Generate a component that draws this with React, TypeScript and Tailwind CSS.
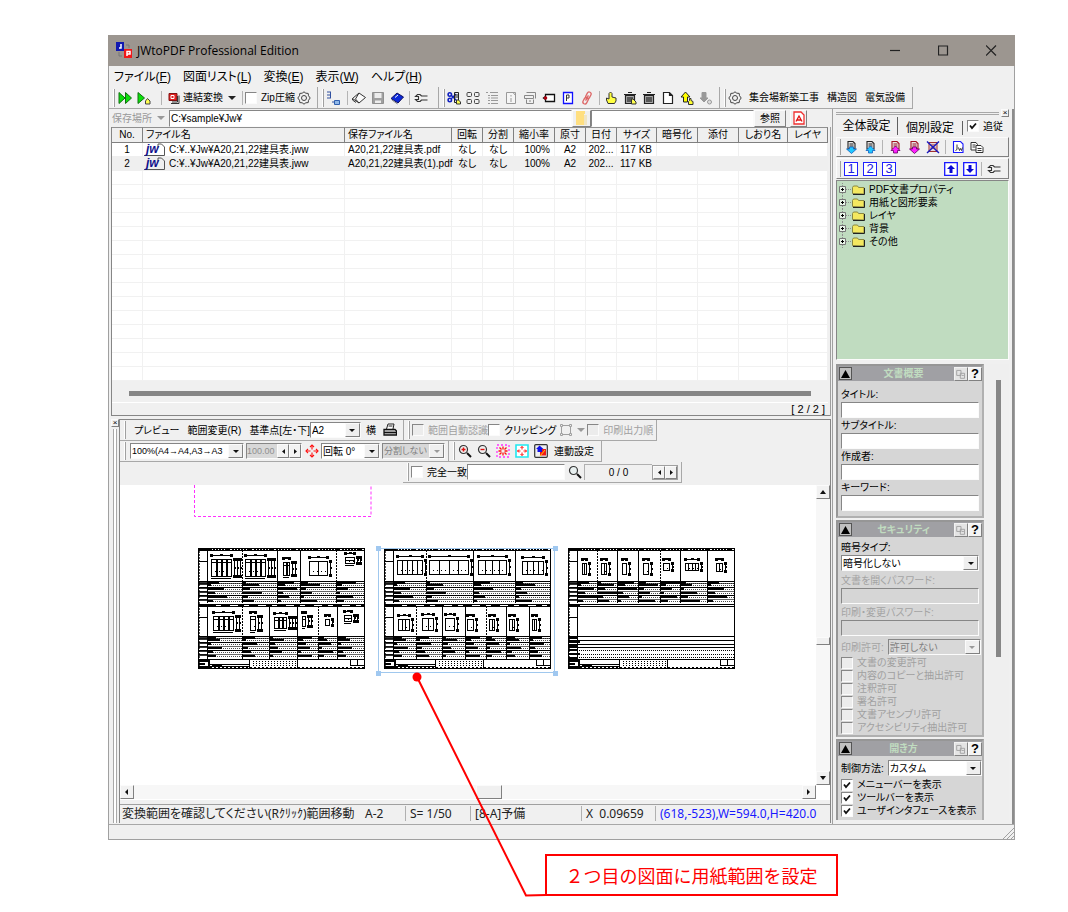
import React from "react";

const INSET = "border border-t-[#868686] border-l-[#868686] border-b-[#fbfbfb] border-r-[#fbfbfb]";
const RAISED = "border border-t-[#fbfbfb] border-l-[#fbfbfb] border-b-[#808080] border-r-[#808080]";

/* ---------- icons, all on a 14 x 14 grid ---------- */

const BULB = (
  <g>
    <path d="M8.5 13.5v-3l1-1v-2h1.500v2l2 1v3z" fill="#ffff30" stroke="#333" strokeWidth="1" />
  </g>
);

const DOC = (color: string) => (
  <path d="M4 1.500h5l2 2V9H4z M5.500 4h4 M5.500 6h4" fill="#e6e6e6" stroke={color} strokeWidth="1.100" />
);

const GLYPHS: Record<string, React.ReactNode> = {
  runAll: <path d="M1 1.500v11l6-5.500z M7.500 1.500v11l6-5.500z" fill="#0be00b" stroke="#107010" />,
  run: (
    <g>
      <path d="M1 1.500v11l6.500-5.500z" fill="#0be00b" stroke="#107010" />
      <path d="M8.500 13v-3l2-2.500 2.500 2.500v3z" fill="#ffff50" stroke="#444" />
    </g>
  ),
  merge: (
    <g>
      <path d="M2 2.500h8v7H2z" fill="#e02020" stroke="#801010" />
      <path d="M4 12.500h8v-8M5 11h5.500V5" fill="none" stroke="#333" />
      <path d="M4 4.500h3v3H4z" fill="none" stroke="#fff" />
    </g>
  ),
  gear: (
    <g fill="none" stroke="#444">
      <path d="M7 .8l1.800 1.400 2.400.2.300 2.300L13.200 7l-1.700 2.300-.3 2.300-2.400.2L7 13.200l-1.800-1.400-2.400-.2-.3-2.300L.8 7l1.700-2.300.3-2.300 2.400-.2z" />
      <circle cx="7" cy="7" r="2.500" />
    </g>
  ),
  tree: (
    <g>
      <path d="M1 1h4M1 4h4M1 7h4M4.500 1v6M6 11h3" fill="none" stroke="#3050a0" />
      <path d="M8.500 9.500h5v4h-5z" fill="#90b8e8" stroke="#3060b0" />
    </g>
  ),
  book: (
    <g>
      <path d="M.5 7.500L7 2l6.500 4.500L7 12z" fill="#fbfbfb" stroke="#333" />
      <path d="M.5 7.500v1.500L4 11.500M7 2L3.500 8 7 12" fill="none" stroke="#333" />
    </g>
  ),
  floppy: (
    <g>
      <path d="M1.500 1.500h11v11h-11z" fill="#a0a0a0" stroke="#909090" />
      <path d="M3.500 2h7v5h-7z M4 9.500h6V12H4z" fill="#ededed" />
    </g>
  ),
  bookBlue: (
    <g>
      <path d="M1 7.500L7 2l6.500 4L8 12z" fill="#0a28d8" stroke="#101060" />
      <path d="M2 9l5.500 4" stroke="#888" fill="none" />
      <path d="M5 6.500l3-2.500" stroke="#fff" fill="none" />
    </g>
  ),
  wrench: (
    <path d="M6 3.500H3.500L1.500 5.500h3v3h-3l2 2H6M6 3.500L7.500 5h6M6 10.500L7.500 9h6" fill="none" stroke="#333" strokeWidth="1.100" />
  ),
  cut: (
    <g>
      <circle cx="2.800" cy="3.500" r="1.700" fill="none" stroke="#1020c0" strokeWidth="1.600" />
      <circle cx="2.800" cy="9" r="1.700" fill="none" stroke="#1020c0" strokeWidth="1.600" />
      <path d="M4 4l6 6M4 8l5-5" stroke="#1020c0" strokeWidth="1.400" />
      <path d="M7.500 1.500h4v10h-4zM8 4h3M8 6h3" fill="none" stroke="#222" />
      <path d="M9.500 13v-4h2l2 2v2z" fill="#ffff50" stroke="#333" />
    </g>
  ),
  grid: (
    <g fill="none" stroke="#444">
      <rect x="1" y="1.500" width="4.500" height="4" rx="1" />
      <rect x="8.500" y="1.500" width="4.500" height="4" rx="1" />
      <rect x="1" y="8.500" width="4.500" height="4" rx="1" />
      <rect x="8.500" y="8.500" width="4.500" height="4" rx="1" />
    </g>
  ),
  list: <path d="M1 1.500h2M5 1.500h8M3 4.500h2M6 4.500h7M3 7h2M6 7h7M3 9.500h2M6 9.500h7M3 12.500h2M6 12.500h7" stroke="#999" />,
  info: <path d="M2.500 1.500h9v11h-9z M7 4v1.500M7 7v4M9 1.500l2.500 3" fill="#f5f5f5" stroke="#999" />,
  wins: <path d="M1.500 4.500h9v3h-9z M3.500 1.500h9v6 M3.500 8.500v4h7v-4 M6 10h2" fill="none" stroke="#888" />,
  tag: (
    <g>
      <path d="M3.500 3.500h9v7h-9v-2l-2-1.500 2-1.500z" fill="#fff" stroke="#111" strokeWidth="1.300" />
      <circle cx="3.500" cy="7" r="1.800" fill="#b00010" />
    </g>
  ),
  page: (
    <g>
      <path d="M2.500 1.500h9v11h-9z" fill="#fff" stroke="#1010ff" strokeWidth="1.300" />
      <path d="M5.500 10V4H8v3H5.500" fill="none" stroke="#333" />
    </g>
  ),
  link: (
    <g fill="none" stroke="#dd6666" strokeWidth="1.300" transform="rotate(28 7 7)">
      <rect x="5" y="0.500" width="4" height="7" rx="2" />
      <rect x="5" y="6.500" width="4" height="7" rx="2" />
      <path d="M7 4v6" />
    </g>
  ),
  hand: <path d="M4 12.500L2.500 9V7L5 8V2.500L6.500 1 8 2.500V6l4 1v3l-1.500 2.500z" fill="#ffff40" stroke="#333" />,
  trashHand: (
    <g>
      <path d="M2.500 4.500h9v8h-9z M1 3.500h12M5 1.500h4M5 6v5M7 6v5M9 6v5" fill="#aaa" stroke="#222" strokeWidth="1.200" />
      <path d="M8.500 13V8h1.500l3 3v2z" fill="#ffff50" stroke="#333" />
    </g>
  ),
  trash: <path d="M2.500 4.500h9v8h-9z M1 3.500h12M5 1.500h4M5 6v5M7 6v5M9 6v5" fill="#aaa" stroke="#222" strokeWidth="1.200" />,
  blank: <path d="M2.500 1.500H8.500L11.500 4.500V12.500H2.500z M8.500 1.500v3h3" fill="#fff" stroke="#222" strokeWidth="1.200" />,
  up: (
    <g>
      <path d="M5.500 1L1 6h2.500v5h4V6H10z" fill="#ffff00" stroke="#222" />
      {BULB}
    </g>
  ),
  down: (
    <g>
      <path d="M5 11L1 7h2V1.500h4V7h2z" fill="#999" stroke="#999" />
      <circle cx="10.500" cy="11" r="2" fill="#ddd" stroke="#999" />
    </g>
  ),
  docDownCyan: (
    <g>
      {DOC("#222")}
      <path d="M7.500 13.500L2.500 9H5.500V7h4v2h3z" fill="#20c8ff" stroke="#1060c0" strokeWidth=".8" />
    </g>
  ),
  docUpCyan: (
    <g>
      {DOC("#222")}
      <path d="M7.500 6L3 10.500H5.500V13h4v-2.500H12z" fill="#20c8ff" stroke="#1060c0" strokeWidth=".8" />
    </g>
  ),
  docUpPink: (
    <g>
      {DOC("#a01020")}
      <path d="M7.500 6L3 10.500H5.500V13h4v-2.500H12z" fill="#ff20ff" stroke="#600060" strokeWidth=".8" />
    </g>
  ),
  docDownPink: (
    <g>
      {DOC("#a01020")}
      <path d="M7.500 13.500L2.500 9H5.500V7h4v2h3z" fill="#ff20ff" stroke="#600060" strokeWidth=".8" />
    </g>
  ),
  docX: (
    <g>
      <path d="M3 2.500h8v9H3z M4.500 5h5M4.500 8h5" fill="#e8d8d8" stroke="#a03030" />
      <path d="M1 1.500l12 11.500M13 1.500L1 13" stroke="#1818c0" strokeWidth="1.400" />
    </g>
  ),
  docJ: (
    <g>
      <path d="M2.500 1.500h7l2.500 2.500v8.500h-9.500z" fill="#fff" stroke="#1818ff" strokeWidth="1.100" />
      <path d="M6 4.500v5l-1.500 1M7.500 7.500l1 3 1-2 1 2 1-3" fill="none" stroke="#333" />
    </g>
  ),
  copy: (
    <g fill="#fff" stroke="#333">
      <path d="M1 2.500h5l1.500 2V10H1z M2.500 5h3M2.500 7h3" />
      <path d="M6 5.500h5l2 2V12.500H6z M7.500 8.500h4M7.500 10.500h4" />
    </g>
  ),
  upBox: (
    <g>
      <path d="M.7.700h12.600v12.600H.7z" fill="#fff" stroke="#1818ff" strokeWidth="1.300" />
      <path d="M7 3L3 7h2.500v4h3V7H11z" fill="#0808d0" />
    </g>
  ),
  downBox: (
    <g>
      <path d="M.7.700h12.600v12.600H.7z" fill="#fff" stroke="#1818ff" strokeWidth="1.300" />
      <path d="M7 11L3 7h2.500V3h3v4H11z" fill="#0808d0" />
    </g>
  ),
  printer: (
    <g>
      <path d="M3.500 6l1.500-5h6l-1 5M5.500 3h4" fill="#fff" stroke="#222" />
      <path d="M1 6.500h11l1.500 1.500v4H1z M1 9.500h12" fill="#ccc" stroke="#111" strokeWidth="1.300" />
    </g>
  ),
  frame: (
    <g fill="none" stroke="#a0a0a0">
      <path d="M2.500 2.500h9v9h-9z" />
      <path d="M1.500 1.500h2v2h-2z M10.500 1.500h2v2h-2z M1.500 10.500h2v2h-2z M10.500 10.500h2v2h-2z" fill="#efefef" />
    </g>
  ),
  target: (
    <g fill="none" stroke="#ff1010" strokeWidth="1.100">
      <path d="M5 3l2-2 2 2M5 11l2 2 2-2M3 5L1 7l2 2M11 5l2 2-2 2" />
      <path d="M7 1v4.500M7 8.500V13M1 7h4.500M8.500 7H13" />
    </g>
  ),
  zoomIn: (
    <g>
      <circle cx="5.500" cy="5.500" r="4" fill="#eee" stroke="#333" strokeWidth="1.200" />
      <path d="M9 9l4 4" stroke="#111" strokeWidth="2" />
      <path d="M3.500 5.500h4M5.500 3.500v4" stroke="#e01010" strokeWidth="1.400" />
    </g>
  ),
  zoomOut: (
    <g>
      <circle cx="5.500" cy="5.500" r="4" fill="#eee" stroke="#333" strokeWidth="1.200" />
      <path d="M9 9l4 4" stroke="#111" strokeWidth="2" />
      <path d="M3.500 5.500h4" stroke="#e01010" strokeWidth="1.400" />
    </g>
  ),
  find: (
    <g>
      <circle cx="5.500" cy="5.500" r="4" fill="#e8f0f0" stroke="#333" strokeWidth="1.200" />
      <path d="M9 9l4 4" stroke="#111" strokeWidth="2" />
    </g>
  ),
  fitPink: (
    <g>
      <path d="M1 1h12v12H1z" fill="none" stroke="#ff30ff" strokeWidth="1.300" strokeDasharray="2 2" />
      <path d="M3.500 3.500l2 2M10.500 3.500l-2 2M3.500 10.500l2-2M10.500 10.500l-2-2M7 2.500v3M7 8.500v3M2.500 7h3M8.500 7h3" stroke="#ff1010" strokeWidth="1.300" />
    </g>
  ),
  fitCyan: (
    <g>
      <path d="M1 1h12v12H1z" fill="#fff" stroke="#20e8f0" strokeWidth="1.600" />
      <path d="M7 2.500v3M7 8.500v3M2.500 7h3M8.500 7h3M5.500 4L7 2.500 8.500 4M5.500 10L7 11.500 8.500 10M4 5.500L2.500 7 4 8.500M10 5.500L11.500 7 10 8.500" fill="none" stroke="#ff1010" />
    </g>
  ),
  shapes: (
    <g>
      <rect x=".7" y=".7" width="12.600" height="12.600" rx="1" fill="#eee" stroke="#333" strokeWidth="1.200" />
      <path d="M6 5h6v6.500H6z" fill="#f01818" />
      <path d="M5.500 1.500l4 3.500H8v3H3.500V5H2z" fill="#1010e8" />
      <path d="M6 12l5-6" stroke="#ffd000" />
    </g>
  ),
  pdf: (
    <g>
      <path d="M2 1h7l3 3v9H2z" fill="#fff" stroke="#f03030" strokeWidth="1.300" />
      <path d="M4 10.500L7 5l3 5.500M4.500 9h5" fill="none" stroke="#e01010" strokeWidth="1.300" />
    </g>
  ),
  folderHalf: (
    <g>
      <path d="M1 0h9v3H9v11H1z" fill="#ffdf80" />
      <path d="M9 4h3v10H9z" fill="#f0d070" opacity=".35" />
    </g>
  ),
};

function Ico({ n, s = 14 }: { n: string; s?: number }) {
  return (
    <svg width={s} height={s} viewBox="0 0 14 14" className="shrink-0" aria-hidden="true">
      {GLYPHS[n]}
    </svg>
  );
}

function IconButton({ n, label }: { n: string; label: string }) {
  return (
    <button type="button" aria-label={label} className="flex h-full w-[19px] shrink-0 items-center justify-center">
      <Ico n={n} />
    </button>
  );
}

function TextButton({ children }: { children: React.ReactNode }) {
  return (
    <button type="button" className="shrink-0 px-1 whitespace-nowrap">
      {children}
    </button>
  );
}

const Sep = () => <span className="mx-[2px] h-[14px] w-px shrink-0 bg-[#b4b4b4]" />;

function Band({ children }: { children: React.ReactNode }) {
  return (
    <div className="flex h-full shrink-0 items-center border-r border-b border-[#a8a8a8] pr-[3px]">
      <span className="ml-1 h-[18px] w-[2px] shrink-0 border-r border-[#a0a0a0] bg-white" />
      {children}
    </div>
  );
}

function Tick({ label, id, checked, disabled, className = "" }: { label: string; id: string; checked?: boolean; disabled?: boolean; className?: string }) {
  return (
    <span className={"flex shrink-0 items-center " + className}>
      <span className={"relative flex size-3 shrink-0 " + INSET + (disabled ? " bg-[#ececec]" : " bg-white")}>
        <input
          type="checkbox"
          id={id}
          defaultChecked={checked}
          disabled={disabled}
          className="peer size-full appearance-none"
        />
        <svg viewBox="0 0 10 10" className="pointer-events-none absolute inset-0 hidden size-[10px] peer-checked:block" aria-hidden="true">
          <path d="M2 4.500l2 2.500 4-4.500" fill="none" stroke="#111" strokeWidth="1.800" />
        </svg>
      </span>
      <label htmlFor={id} className={"pl-1 whitespace-nowrap " + (disabled ? "text-[#a0a0a0]" : "")}>
        {label}
      </label>
    </span>
  );
}

function Drop({ label, value, disabled, className = "", id }: { label: string; value: string; disabled?: boolean; className?: string; id?: string }) {
  return (
    <span className={"relative flex h-4 shrink-0 " + INSET + (disabled ? " bg-[#d8d8d8] text-[#808080] " : " bg-white ") + className}>
      <select id={id} aria-label={label} disabled={disabled} className="h-full w-full appearance-none overflow-hidden bg-transparent pr-[15px] pl-px opacity-100">
        <option>{value}</option>
      </select>
      <span className={"pointer-events-none absolute top-0 right-0 flex h-full w-[15px] items-center justify-center bg-[#efefef] " + RAISED}>
        <svg width="6" height="3" aria-hidden="true">
          <path d="M0 0h6L3 3z" fill={disabled ? "#999" : "#111"} />
        </svg>
      </span>
    </span>
  );
}

function Spin() {
  return (
    <>
      {[
        ["前へ", "M3 0v5L0 2.500z"],
        ["次へ", "M0 0v5L3 2.500z"],
      ].map(([l, d]) => (
        <button key={l} type="button" aria-label={l} className={"flex h-full w-3 shrink-0 items-center justify-center bg-[#f2f2f2] " + RAISED}>
          <svg width="3" height="5" aria-hidden="true">
            <path d={d} fill="#111" />
          </svg>
        </button>
      ))}
    </>
  );
}

/* ---------- file list ---------- */

const COLS: [string, string][] = [
  ["No.", "w-[31px]"],
  ["ファイル名", ""],
  ["保存ファイル名", "w-[107px]"],
  ["回転", "w-[31px]"],
  ["分割", "w-[31px]"],
  ["縮小率", "w-[41px]"],
  ["原寸", "w-[31px]"],
  ["日付", "w-[31px]"],
  ["サイズ", "w-[40px]"],
  ["暗号化", "w-[41px]"],
  ["添付", "w-[41px]"],
  ["しおり名", "w-[49px]"],
  ["レイヤ", "w-[40px]"],
];

const FILES = [
  ["1", "C:¥..¥Jw¥A20,21,22建具表.jww", "A20,21,22建具表.pdf", "なし", "なし", "100%", "A2", "202...", "117 KB", "", "", "", ""],
  ["2", "C:¥..¥Jw¥A20,21,22建具表.jww", "A20,21,22建具表(1).pdf", "なし", "なし", "100%", "A2", "202...", "117 KB", "", "", "", ""],
];

function FileList() {
  const blanks = Array.from({ length: 15 }, (_, i) => i);
  return (
    <table className="w-full table-fixed border-separate border-spacing-0 bg-white">
      <colgroup>
        {COLS.map(([h, w]) => (
          <col key={h} className={w} />
        ))}
      </colgroup>
      <thead>
        <tr>
          {COLS.map(([h], i) => (
            <th
              key={h}
              className={
                "h-4 overflow-hidden border-t border-r border-b border-t-[#909090] border-r-[#808080] border-b-[#808080] bg-[#efefef] p-0 px-[3px] leading-[14px] font-normal whitespace-nowrap " +
                (i === 1 || i === 2 ? "text-left" : "text-center")
              }
            >
              {h}
            </th>
          ))}
        </tr>
      </thead>
      <tbody>
        {FILES.map((r, k) => (
          <tr key={k} className={k ? "bg-[#efefef]" : ""}>
            {r.map((c, i) => (
              <td
                key={i}
                className={
                  "h-[14px] border-r border-b border-[#efefef] p-0 leading-[13px] whitespace-nowrap " +
                  (i === 1 ? "" : i === 2 ? "pl-[3px]" : i === 5 || i === 8 ? "pr-1 text-right" : "text-center")
                }
              >
                {i === 1 ? (
                  <span className="flex items-center gap-1">
                    <svg width="22" height="13" aria-hidden="true">
                      <path d="M1 12.500h20.500V4l-3-3H15v3.500" fill="none" stroke="#555" />
                      <text x="3" y="10" fontSize="12" fontStyle="italic" fontWeight="bold" fontFamily="Liberation Sans, sans-serif" fill="#10108c">
                        jw
                      </text>
                    </svg>
                    {c}
                  </span>
                ) : (
                  c
                )}
              </td>
            ))}
          </tr>
        ))}
        {blanks.map((b) => (
          <tr key={b}>
            {COLS.map(([h]) => (
              <td key={h} className="h-[14px] border-r border-b border-[#f1f1f1] p-0" />
            ))}
          </tr>
        ))}
      </tbody>
    </table>
  );
}

/* ---------- preview drawings ---------- */

type Fig = [number, number, number, number, number, number?];
// x, y, width, height, panes, number of vertical dimension lines

function Fixture({ f }: { f: Fig }) {
  const [x, y, w, h, n, d = 1] = f;
  const panes = Array.from({ length: n - 1 }, (_, i) => x + Math.round(((i + 1) * w) / n));
  const right = Array.from({ length: d }, (_, i) => x + w + 3 + i * 3);
  const dense = d > 1;
  const dots = [
    [x, y - 4],
    [x + w, y - 4],
    ...right.flatMap((r) => [
      [r, y],
      [r, y + h],
    ]),
  ];
  return (
    <g stroke="#000" fill="none" strokeWidth="1">
      <rect x={x + 0.5} y={y + 0.5} width={w} height={h} />
      {dense && <path d={`M${x} ${y + 3.5}h${w}M${x} ${y + h + 2.5}h${w}`} />}
      {panes.map((p) => (
        <path key={p} d={`M${p + 0.5} ${y}v${h}`} strokeWidth={dense ? 2 : 1} />
      ))}
      <path d={`M${x} ${y + Math.round(h * 0.7) + 0.5}h${w}`} strokeDasharray="1 3" />
      <path d={`M${x} ${y - 3.5}h${w}`} />
      <path d={`M${x + w / 2 - 1} ${y - 4.5}h3`} />
      {right.map((r) => (
        <path key={r} d={`M${r + 0.5} ${y}v${h}`} />
      ))}
      {right.map((r) => (
        <path key={r} d={`M${r} ${y + Math.round(h / 2)}h2`} strokeWidth="2" />
      ))}
      {dots.map(([a, b]) => (
        <rect key={a + "," + b} x={a - 1} y={b - 1} width="3" height="3" fill="#000" stroke="none" />
      ))}
    </g>
  );
}

function Rows({ top, edges, lens, bottom }: { top: number; edges: number[]; lens: number[]; bottom: number }) {
  const ys = [0, 2, 6, 10, 14, 18].map((v) => top + v).filter((v) => v < bottom);
  return (
    <g stroke="#000" fill="none">
      {ys.map((y, i) => (
        <g key={y}>
          <path d={`M0 ${y + 0.5}H167`} strokeOpacity={i % 2 ? 0.6 : 1} />
          <path d={`M9 ${y + 2.5}H167`} strokeDasharray="1 1" strokeOpacity=".7" />
          <path d={`M0 ${y + 1}H9`} strokeWidth="2" strokeOpacity=".8" />
          {edges.map((e, k) => (
            <path key={e} d={`M${e} ${y + 2}h${lens[(i + k) % lens.length]}`} strokeWidth="2" />
          ))}
        </g>
      ))}
    </g>
  );
}

function Sheet({ x, top, bottom, figs, emptyBottom }: { x: number; top: number[]; bottom: number[]; figs: Fig[]; emptyBottom?: boolean }) {
  return (
    <g transform={`translate(${x} 63)`} shapeRendering="crispEdges">
      <g fill="none" stroke="#000">
        <rect x=".5" y=".5" width="166" height="120" />
        <path d="M0 1h12" strokeWidth="2" />
        <path d="M12 1h155" strokeWidth="2" strokeDasharray="2 1 2 1 2 1 2 1 2 1 5 2" />
        <path d="M0 2.500h167M0 56.500h167M0 58.500h167M0 111.500h167M0 13.500h9M0 69.500h9M0 88.500h167M0 33.500h167" />
        <path d="M0 57h12" strokeWidth="2" />
        <path d="M1 0v120" strokeWidth="2" strokeDasharray="2 1" strokeOpacity=".7" />
        {!emptyBottom && <path d="M12 57.500h155" strokeDasharray="6 5 9 8" />}
        {[9, ...top].map((c, i) => (
          <path key={c} d={`M${c}.5 2V55`} strokeDasharray={i % 3 === 1 ? "2 1" : "none"} />
        ))}
        {[9, ...bottom].map((c, i) => (
          <path key={c} d={`M${c}.5 58V111`} strokeDasharray={i % 3 === 1 ? "2 1" : "none"} />
        ))}
      </g>
      <Rows top={33} bottom={54} edges={[9, ...top]} lens={[12, 4, 17, 8, 20, 6]} />
      {emptyBottom ? (
        <g stroke="#000" fill="none">
          <path d="M0 92.500h167M0 96.500h167M0 99.500h167" />
          <path d="M9 102.500h158M9 106.500h158M9 109.500h158" strokeDasharray="1 1" />
          <path d="M0 90h9M0 94h12M0 98h9M0 102h9M0 106h12M0 110h9" strokeWidth="2" />
        </g>
      ) : (
        <Rows top={88} bottom={110} edges={[9, ...bottom]} lens={[9, 13, 4, 15, 6]} />
      )}
      {figs.map((f, i) => (
        <Fixture key={i} f={f} />
      ))}
      <g stroke="#000" fill="none">
        <path d="M51.500 112v9M99.500 112v9M152.500 112v5.500h14M159.500 112v6" />
        <path d="M1 113h10M1 116h6M11 112v9M1 119h12" strokeWidth="2" />
        <path d="M12 116.500h40M12 118.500h40" />
        <path d="M14 118h10" strokeWidth="2" />
        <path d="M55 113.500h43M55 115.500h43M55 117.500h43" strokeDasharray="1 2" />
        <path d="M0 119.500h167" strokeDasharray="2 2" />
      </g>
    </g>
  );
}

function Preview() {
  return (
    <svg className="h-[300px] min-w-0 flex-1 bg-white" role="img" aria-label="図面プレビュー">
      <path d="M74.500 0v31.500h176.500V0" fill="none" stroke="#ff30ff" strokeDasharray="3 2" />
      <Sheet
        x={78}
        top={[44, 79, 102, 138]}
        bottom={[44, 71, 99, 120, 139]}
        figs={[
          [13, 11, 20, 17, 4, 3],
          [47, 11, 20, 17, 4, 3],
          [85, 14, 6, 13, 2, 2],
          [111, 13, 18, 14, 2, 1],
          [147, 9, 9, 6, 1, 2],
          [15, 68, 20, 14, 4, 2],
          [52, 68, 5, 14, 1, 2],
          [76, 69, 12, 11, 3, 3],
          [104, 68, 3, 10, 1, 2],
          [127, 71, 4, 6, 1, 1],
          [146, 67, 7, 6, 1, 2],
        ]}
      />
      <Sheet
        x={264}
        top={[42, 89, 131]}
        bottom={[32, 58, 81, 102, 122, 145]}
        figs={[
          [13, 12, 25, 14, 5],
          [45, 12, 39, 14, 4],
          [94, 12, 28, 14, 4],
          [138, 13, 21, 13, 4],
          [14, 71, 11, 11, 3, 1],
          [38, 70, 11, 12, 2],
          [61, 70, 9, 12, 1],
          [83, 71, 6, 11, 1],
          [105, 71, 5, 11, 2],
          [125, 71, 5, 11, 2],
          [148, 71, 4, 11, 2],
        ]}
      />
      <Sheet
        x={448}
        top={[29, 49, 70, 92, 112, 139]}
        bottom={[]}
        emptyBottom
        figs={[
          [14, 15, 4, 11, 2, 1],
          [33, 15, 5, 11, 2, 1],
          [54, 15, 4, 11, 1],
          [75, 15, 5, 11, 1],
          [95, 15, 6, 7, 1],
          [117, 15, 13, 7, 4, 1],
          [148, 15, 6, 8, 2, 1],
        ]}
      />
      <rect x="258.500" y="63.500" width="176" height="124" fill="none" stroke="#a0c8ee" />
      {[
        [258, 63],
        [435, 63],
        [258, 188],
        [435, 188],
      ].map(([a, b]) => (
        <rect key={a + "-" + b} x={a - 2} y={b - 2} width="5" height="5" fill="#a0c8f0" />
      ))}
    </svg>
  );
}

function ScrollArrow({ d, label }: { d: string; label: string }) {
  return (
    <button type="button" aria-label={label} className={"flex size-[14px] shrink-0 items-center justify-center bg-[#f2f2f2] " + RAISED}>
      <svg width="6" height="6" aria-hidden="true">
        <path d={d} fill="#111" />
      </svg>
    </button>
  );
}

/* ---------- right-hand settings ---------- */

function Group({ title, children, className = "" }: { title: string; children: React.ReactNode; className?: string }) {
  return (
    <section className={"mb-[2px] border-2 border-t-[#969696] border-l-[#969696] border-r-[#b0b0b0] border-b-[#b0b0b0] bg-[#d6d6d6] " + className}>
      <header className="flex h-[15px] items-center bg-[#a0a0a4]">
        <button type="button" aria-label="折りたたむ" className="m-px flex size-[13px] items-center justify-center border border-[#555] bg-[#c0c0c0]">
          <svg width="9" height="8" aria-hidden="true">
            <path d="M4.500 0L9 8H0z" fill="#000" />
          </svg>
        </button>
        <h2 className="flex-1 text-center leading-[13px] font-bold text-[#c0dcc0]">{title}</h2>
        <button type="button" aria-label="コピー" className={"flex size-[14px] items-center justify-center bg-[#ececec] opacity-90 " + RAISED}>
          <svg width="10" height="10" viewBox="0 0 14 14" aria-hidden="true">
            <path d="M1 2h6v7H1z M6 6h6v7H6z M8 9h3" fill="none" stroke="#a0a0a0" strokeWidth="1.300" />
          </svg>
        </button>
        <button type="button" aria-label="ヘルプ" className={"flex size-[14px] items-center justify-center bg-[#f4f4f4] text-[13px] leading-none font-bold " + RAISED}>
          ?
        </button>
      </header>
      {children}
    </section>
  );
}

function Field({ label, id, disabled }: { label: string; id: string; disabled?: boolean }) {
  return (
    <div className={disabled ? "mb-px" : ""}>
      <label htmlFor={id} className={"block h-[15px] leading-[15px] " + (disabled ? "text-[#a4a4a4]" : "")}>
        {label}
      </label>
      <input
        id={id}
        type="text"
        disabled={disabled}
        className={"block h-4 w-full px-1 " + INSET + (disabled ? " bg-[#d6d6d6]" : " bg-white")}
      />
    </div>
  );
}

const TREE = ["PDF文書プロパティ", "用紙と図形要素", "レイヤ", "背景", "その他"];
const PERMS = ["文書の変更許可", "内容のコピーと抽出許可", "注釈許可", "署名許可", "文書アセンブリ許可", "アクセシビリティ抽出許可"];
const OPENING = ["メニューバーを表示", "ツールバーを表示", "ユーザインタフェースを表示"];

function Settings() {
  return (
    <aside className="flex w-[182px] shrink-0 flex-col border-r-2 border-l border-r-[#8c8c8c] border-l-[#a0a0a0] px-[3px]">
      <div className="flex h-[8px] items-center gap-[2px]">
        <span className="h-[3px] flex-1 border-y border-[#a8a8a8]" />
        <button type="button" aria-label="閉じる" className={"flex size-2 items-center justify-center text-[8px] leading-none " + RAISED}>
          ×
        </button>
      </div>
      <div className="flex h-[18px] items-center" role="tablist">
        <button type="button" role="tab" aria-selected="true" className="h-full w-[62px] shrink-0 border-r border-[#606060] text-[12px] whitespace-nowrap">
          全体設定
        </button>
        <button type="button" role="tab" aria-selected="false" className="mt-[3px] h-[14px] w-[65px] shrink-0 border-r border-[#606060] text-[12px] leading-[14px] whitespace-nowrap">
          個別設定
        </button>
        <Tick id="follow" label="追従" checked className="pl-1" />
      </div>
      <div className={"mt-[2px] flex h-[20px] items-center " + RAISED}>
        <span className="ml-[3px] h-4 w-px bg-[#a0a0a0]" />
        <IconButton n="docDownCyan" label="読込" />
        <IconButton n="docUpCyan" label="書出" />
        <span className="w-px" />
        <Sep />
        <IconButton n="docUpPink" label="上へ適用" />
        <IconButton n="docDownPink" label="下へ適用" />
        <IconButton n="docX" label="解除" />
        <span className="w-px" />
        <Sep />
        <IconButton n="docJ" label="Jw設定" />
        <IconButton n="copy" label="コピー" />
      </div>
      <div className={"mt-px flex h-[21px] items-center pr-[5px] " + RAISED}>
        <span className="ml-[3px] h-4 w-px bg-[#a0a0a0]" />
        <div className="flex flex-1 gap-[5px] pl-[3px]">
          {["1", "2", "3"].map((n) => (
            <button key={n} type="button" className="size-[14px] border border-[#2020ff] bg-white text-[13px] leading-[12px] text-[#2020e0]">
              {n}
            </button>
          ))}
        </div>
        <IconButton n="upBox" label="上へ" />
        <IconButton n="downBox" label="下へ" />
        <Sep />
        <IconButton n="wrench" label="設定" />
      </div>
      <ul className={"mt-px h-[180px] bg-[#c0dcc0] pt-[2px] pl-[2px] " + INSET}>
        {TREE.map((t) => (
          <li key={t} className="flex h-[13px] items-center">
            <svg width="26" height="13" aria-hidden="true">
              <path d="M.5 3.500h6v6h-6z" fill="#e8f4e8" stroke="#777" />
              <path d="M2 6.500h3M3.500 5v3" stroke="#000" />
              <path d="M7 6.500h6M3.500 0v3M3.500 10v3" stroke="#909090" strokeDasharray="1 1" />
              <path d="M13.500 10.500V4.500l1-1.500h4l1 1.500h5.500v6.500z" fill="#f4e860" stroke="#8a8840" />
              <path d="M14 11.500h11.500V5" fill="none" stroke="#222" />
            </svg>
            <span className="pl-1 whitespace-nowrap">{t}</span>
          </li>
        ))}
      </ul>
      <div className="mt-[4px] flex h-[456px] overflow-hidden">
        <div className="min-w-0 flex-1">
          <Group title="文書概要">
            <div className="px-[3px] pt-[6px] pb-[5px]">
              <Field id="title" label="タイトル:" />
              <Field id="subtitle" label="サブタイトル:" />
              <Field id="author" label="作成者:" />
              <Field id="keyword" label="キーワード:" />
            </div>
          </Group>
          <Group title="セキュリティ">
            <div className="px-[3px] pt-1 pb-px">
              <label htmlFor="crypt" className="block h-[14px] leading-[14px]">
                暗号タイプ:
              </label>
              <Drop id="crypt" label="暗号タイプ" value="暗号化しない" />
              <div className="pt-[2px]">
                <Field id="openpw" label="文書を開くパスワード:" disabled />
                <Field id="editpw" label="印刷・変更パスワード:" disabled />
              </div>
              <div className="flex items-center gap-1 pt-[2px] pb-px">
                <label htmlFor="print" className="whitespace-nowrap text-[#a4a4a4]">
                  印刷許可:
                </label>
                <Drop id="print" label="印刷許可" value="許可しない" disabled className="w-[93px]" />
              </div>
              {PERMS.map((p, i) => (
                <Tick key={p} id={"perm" + i} label={p} disabled className="h-[13px]" />
              ))}
            </div>
          </Group>
          <Group title="開き方">
            <div className="px-[3px] pt-1 pb-[4px]">
              <div className="flex items-center gap-1 pb-[2px]">
                <label htmlFor="control" className="whitespace-nowrap">
                  制御方法:
                </label>
                <Drop id="control" label="制御方法" value="カスタム" className="w-[94px]" />
              </div>
              {OPENING.map((p, i) => (
                <Tick key={p} id={"open" + i} label={p} checked className="h-[13px]" />
              ))}
            </div>
          </Group>
        </div>
        <div className="ml-[2px] w-[23px] shrink-0 bg-[#efefef] pt-4 pl-[10px]">
          <div className="h-[277px] w-[5px] bg-[#868686]" />
        </div>
      </div>
    </aside>
  );
}

/* ---------- page ---------- */

const MENUS: [string, string][] = [
  ["ファイル", "F"],
  ["図面リスト", "L"],
  ["変換", "E"],
  ["表示", "W"],
  ["ヘルプ", "H"],
];

export default function App() {
  return (
    <div className="relative min-h-screen overflow-hidden bg-white pt-[35px] pr-[53px] pl-[108px] font-['Liberation_Sans','Noto_Sans_CJK_JP',sans-serif] text-[10px] leading-[13px] text-black [font-feature-settings:'palt']">
      <main className="border border-[#a0a0a0] bg-[#f0f0f0]">
        <div className="-mx-px -mt-px flex h-[31px] items-center bg-[#9c9690] pl-2">
          <svg width="17" height="17" aria-hidden="true">
            <path d="M0 0h8v9H0z" fill="#1018b0" />
            <path d="M8 7h8v9H8z" fill="#f01818" />
            <path d="M5 2v4H3M11 14V9.500h3v2.500h-3" fill="none" stroke="#fff" strokeWidth="1.500" />
            <path d="M3 10v4h3M10 3h3v3" fill="none" stroke="#777" />
          </svg>
          <h1 className="flex-1 pl-1 font-['Open_Sans','Noto_Sans',sans-serif] text-[12px]">JWtoPDF Professional Edition</h1>
          {[
            ["最小化", "M0 5.500h10"],
            ["最大化", "M.5 1h9v9h-9z"],
            ["閉じる", "M0 .5l10 10M10 .5l-10 10"],
          ].map(([l, d]) => (
            <button key={l} type="button" aria-label={l} className="flex h-full w-12 items-center justify-center">
              <svg width="11" height="11" aria-hidden="true">
                <path d={d} fill="none" stroke="#222" strokeWidth="1.200" />
              </svg>
            </button>
          ))}
        </div>

        <nav className="flex h-[21px] items-center gap-3 pl-[5px] font-['Liberation_Sans','Noto_Sans_CJK_JP',sans-serif] text-[12px] leading-[18px]">
          {MENUS.map(([m, k]) => (
            <button key={m} type="button" className="whitespace-nowrap">
              {m}(<u>{k}</u>)
            </button>
          ))}
        </nav>

        <div className="flex h-[22px]">
          <Band>
            <IconButton n="runAll" label="全て変換" />
            <IconButton n="run" label="選択変換" />
            <span className="w-[6px]" />
            <Sep />
            <IconButton n="merge" label="連結" />
            <button type="button" className="whitespace-nowrap">連結変換</button>
            <svg width="8" height="4" className="mr-1 ml-[5px]" aria-hidden="true">
              <path d="M0 0h8L4 4z" fill="#222" />
            </svg>
            <Sep />
            <Tick id="zip" label="Zip圧縮" />
            <IconButton n="gear" label="圧縮設定" />
          </Band>
          <Band>
            <IconButton n="tree" label="階層" />
            <span className="w-[2px]" />
            <Sep />
            <IconButton n="book" label="設定を開く" />
            <IconButton n="floppy" label="保存" />
            <IconButton n="bookBlue" label="設定保存" />
            <Sep />
            <IconButton n="wrench" label="環境設定" />
            <span className="w-1" />
          </Band>
          <Band>
            <IconButton n="cut" label="切り出し" />
            <IconButton n="grid" label="一覧" />
            <IconButton n="list" label="リスト" />
            <IconButton n="info" label="情報" />
            <IconButton n="wins" label="ウィンドウ" />
            <IconButton n="tag" label="タグ" />
            <IconButton n="page" label="ページ" />
            <IconButton n="link" label="リンク" />
            <Sep />
            <IconButton n="hand" label="選択" />
            <IconButton n="trashHand" label="選択削除" />
            <IconButton n="trash" label="削除" />
            <IconButton n="blank" label="新規" />
            <IconButton n="up" label="上へ移動" />
            <IconButton n="down" label="下へ移動" />
          </Band>
          <Band>
            <IconButton n="gear" label="登録設定" />
            <TextButton>集会場新築工事</TextButton>
            <TextButton>構造図</TextButton>
            <TextButton>電気設備</TextButton>
          </Band>
        </div>

        <div className="flex h-[715px]">
          <div className="flex min-w-0 flex-1 flex-col">
            <div className="mr-1 ml-[2px] flex h-[18px] items-center">
              <label htmlFor="dest" className="w-[46px] pl-px whitespace-nowrap text-[#999]">
                保存場所
              </label>
              <svg width="8" height="4" className="mr-[4px]" aria-hidden="true">
                <path d="M0 0h8L4 4z" fill="#999" />
              </svg>
              <input id="dest" defaultValue="C:¥sample¥Jw¥" className={"h-[17px] w-[403px] bg-white px-px " + INSET} />
              <button type="button" aria-label="フォルダ" className={"flex h-[17px] w-[19px] shrink-0 items-center justify-center " + RAISED}>
                <Ico n="folderHalf" />
              </button>
              <input aria-label="ファイル" className={"h-[17px] min-w-0 flex-1 bg-white px-1 " + INSET} />
              <button type="button" className={"h-[17px] w-8 shrink-0 " + RAISED}>参照</button>
              <button type="button" aria-label="PDF" className={"mr-[21px] ml-1 flex h-[17px] w-[17px] shrink-0 items-center justify-center " + RAISED}>
                <Ico n="pdf" />
              </button>
            </div>
            <section className="mr-px ml-[2px] h-[289px] border-b border-l border-[#868686]">
              <div className="border-r border-[#a0a0a0] pr-[2px]">
                <FileList />
                <div className="mt-[10px] mr-[17px] ml-[17px] h-[5px] bg-[#868686]" />
                <div className="mt-[6px] flex h-[14px] items-center justify-end border-t border-[#fff] pr-[3px] text-[11px]">[ 2 / 2 ]</div>
              </div>
            </section>
            <section className="mt-[3px] mr-px ml-[2px] flex h-[404px] border-r border-[#868686]">
              <div className="flex w-2 shrink-0 flex-col items-center">
                <button type="button" aria-label="プレビューを閉じる" className={"flex size-2 items-center justify-center text-[8px] leading-none " + RAISED}>
                  ×
                </button>
                <span className="mt-[2px] w-1 flex-1 border-x border-[#a8a8a8] bg-white" />
              </div>
              <div className="flex min-w-0 flex-1 flex-col border-t border-l border-[#868686]">
                <div className="flex h-[21px]">
                  <Band>
                    <span className="w-1" />
                    <TextButton>プレビュー</TextButton>
                    <TextButton>範囲変更(R)</TextButton>
                    <button type="button" className="pl-1 whitespace-nowrap">基準点[左・下]</button>
                    <Drop label="用紙" value="A2" className="w-[51px]" />
                    <span className="px-[5px]">横</span>
                    <IconButton n="printer" label="印刷" />
                  </Band>
                  <Band>
                    <span className="w-[2px]" />
                    <Tick id="autorange" label="範囲自動認識" disabled />
                    <Tick id="clip" label="クリッピング" />
                    <IconButton n="frame" label="枠" />
                    <svg width="8" height="4" className="mx-[2px]" aria-hidden="true">
                      <path d="M0 0h8L4 4z" fill="#999" />
                    </svg>
                    <Tick id="order" label="印刷出力順" disabled />
                  </Band>
                </div>
                <div className="flex h-[21px]">
                  <Band>
                    <span className="w-1" />
                    <Drop label="縮尺" value="100%(A4→A4,A3→A3" className="w-[114px] text-[9px]" />
                    <span className={"ml-[2px] flex h-4 w-[56px] shrink-0 bg-[#d8d8d8] " + INSET}>
                      <input aria-label="倍率" disabled defaultValue="100.00" className="w-0 min-w-0 flex-1 bg-transparent text-[9px] text-[#909090]" />
                      <Spin />
                    </span>
                    <IconButton n="target" label="中心" />
                    <Drop label="回転" value="回転 0°" className="w-[59px]" />
                    <Drop label="分割" value="分割しない" disabled className="ml-[2px] w-[63px] text-[9px]" />
                  </Band>
                  <Band>
                    <IconButton n="zoomIn" label="拡大" />
                    <IconButton n="zoomOut" label="縮小" />
                    <IconButton n="fitPink" label="範囲全体" />
                    <IconButton n="fitCyan" label="用紙全体" />
                    <IconButton n="shapes" label="図形" />
                    <TextButton>連動設定</TextButton>
                  </Band>
                </div>
                <div className="flex h-[23px] pb-[2px] pl-[283px]">
                  <Band>
                    <span className="w-[2px]" />
                    <Tick id="exact" label="完全一致" />
                    <input aria-label="検索" className={"h-4 w-[98px] bg-white px-1 " + INSET} />
                    <IconButton n="find" label="検索" />
                    <span className="flex h-4 w-[68px] items-center justify-center border-t border-l border-[#b0b0b0]">0 / 0</span>
                    <span className="flex h-[15px] border border-[#a0a0a0]">
                      <Spin />
                    </span>
                  </Band>
                </div>
                <div className="flex bg-white">
                  <Preview />
                  <div className="flex w-[14px] shrink-0 flex-col bg-[#f7f7f7]">
                    <ScrollArrow d="M0 5h6L3 1z" label="上" />
                    <span className="flex-1" />
                    <span className={"h-2 bg-[#f0f0f0] " + RAISED} />
                    <span className="h-[126px]" />
                    <ScrollArrow d="M0 1h6L3 5z" label="下" />
                  </div>
                </div>
                <div className="flex h-[15px] bg-white pr-[14px]">
                  <div className="flex h-[14px] flex-1 bg-[#f7f7f7]">
                    <ScrollArrow d="M4 0v6L1 3z" label="左" />
                    <span className="flex-1" />
                    <span className={"w-[26px] bg-[#f0f0f0] " + RAISED} />
                    <span className="w-[300px]" />
                    <ScrollArrow d="M1 0v6L4 3z" label="右" />
                  </div>
                </div>
                <footer className="mt-[4px] flex h-[18px] items-center gap-1 border-t border-[#a0a0a0] font-['Noto_Sans','Noto_Sans_CJK_JP',sans-serif] text-[12px] leading-[15px] text-[#222]">
                  <span className="w-[241px] pl-[2px] whitespace-nowrap">変換範囲を確認してください(Rｸﾘｯｸ)範囲移動</span>
                  <span className="w-[41px] border-r border-[#b0b0b0]">A-2</span>
                  <span className="w-[61px] border-r border-[#b0b0b0]">S= 1/50</span>
                  <span className="min-w-0 flex-1 border-r border-[#b0b0b0] whitespace-nowrap">[8-A]予備</span>
                  <span className="w-[70px] border-r border-[#b0b0b0] whitespace-nowrap">X&nbsp; 0.09659</span>
                  <span className="w-[170px] shrink-0 whitespace-nowrap text-[#1818ff]">(618,-523),W=594.0,H=420.0</span>
                </footer>
              </div>
            </section>
          </div>
          <Settings />
        </div>
        <div className="flex h-[15px] items-end justify-end border-t border-[#a8a8a8]">
          <svg width="11" height="11" aria-hidden="true">
            <path d="M0 11L11 0M4 11l7-7M8 11l3-3" stroke="#a0a0a0" />
          </svg>
        </div>
      </main>

      <p className="mt-[14px] ml-[437px] flex h-[42px] w-[293px] items-center justify-center border-2 border-[#ff0000] font-['Noto_Sans_CJK_JP',sans-serif] text-[18px] whitespace-nowrap text-[#ff0000] [font-feature-settings:normal]">
        ２つ目の図面に用紙範囲を設定
      </p>
      <svg className="pointer-events-none absolute top-[670px] left-[410px] h-[230px] w-[140px]" aria-hidden="true">
        <circle cx="7" cy="7" r="4.500" fill="#ff0000" />
        <path d="M7 7L116 225.500L136 225" fill="none" stroke="#ff0000" strokeWidth="2" />
      </svg>
    </div>
  );
}
